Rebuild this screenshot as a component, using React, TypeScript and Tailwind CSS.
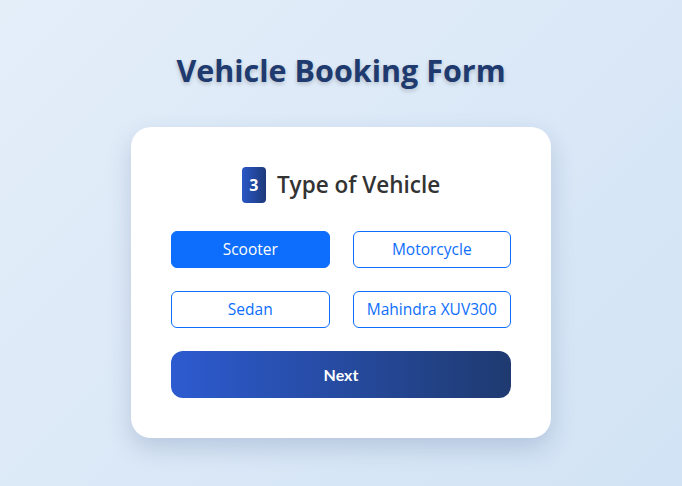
import React, { useState } from "react";

const vehicles = ["Scooter", "Motorcycle", "Sedan", "Mahindra XUV300"];

const App = () => {
  const [selected, setSelected] = useState("Scooter");

  return (
    <div className="min-h-[486px] w-full bg-[linear-gradient(135deg,#e4eef9_0%,#d2e3f5_100%)] pt-[46px] font-['Open_Sans',sans-serif]">
      <h1 className="text-center text-[30.5px] leading-[48px] font-bold text-[#1e3a6e] [text-shadow:0_2px_4px_rgba(0,0,0,0.2)] mb-[33px]">
        Vehicle Booking Form
      </h1>

      <div className="mx-auto w-[420px] rounded-[20px] bg-white p-10 shadow-[0_10px_25px_rgba(30,58,110,0.18)]">
        <div className="flex items-center justify-center gap-[11px] h-9">
          <span className="flex h-9 w-6 items-center justify-center rounded-[4px] bg-[linear-gradient(90deg,#2a56c6,#1e3a7a)] text-[16px] font-bold text-white">
            3
          </span>
          <h2 className="text-[22.5px] font-semibold text-[#333]">
            Type of Vehicle
          </h2>
        </div>

        <div className="mt-7 grid grid-cols-2 gap-x-[23px] gap-y-[23px]">
          {vehicles.map((v) => (
            <button
              key={v}
              onClick={() => setSelected(v)}
              className={
                selected === v
                  ? "h-[37px] rounded-[6px] border border-[#0d6efd] bg-[#0d6efd] pt-px text-[15.5px] text-white"
                  : "h-[37px] rounded-[6px] border border-[#0d6efd] bg-white pt-px text-[15.5px] text-[#0d6efd]"
              }
            >
              {v}
            </button>
          ))}
        </div>

        <button className="mt-[23px] h-[47px] w-full rounded-[12px] bg-[linear-gradient(90deg,#2d5bd0,#1f3a70)] font-['Lato',sans-serif] text-[16px] font-bold text-white">
          Next
        </button>
      </div>
    </div>
  );
};

export default App;
